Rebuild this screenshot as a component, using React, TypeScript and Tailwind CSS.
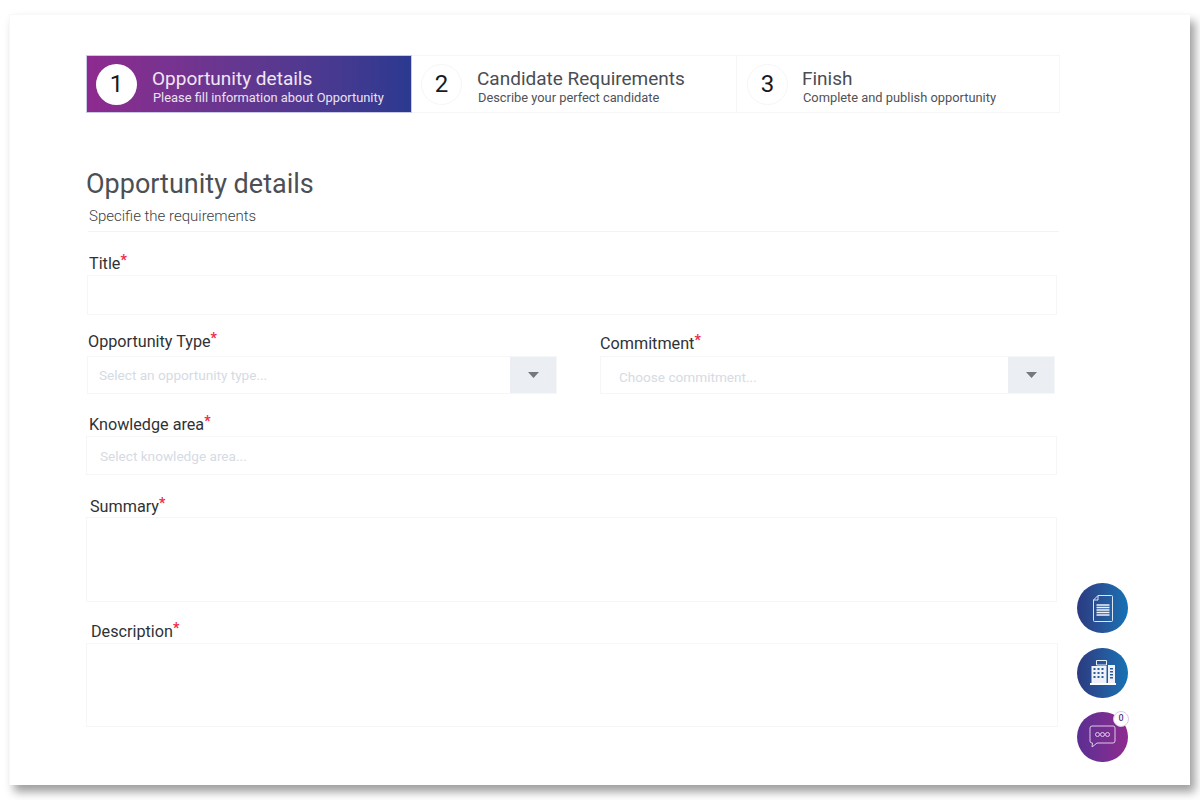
import React from 'react';

interface StepProps {
  num: number;
  title: string;
  sub: string;
  active?: boolean;
  className?: string;
  circleClass?: string;
}

function Step({ num, title, sub, active, className, circleClass }: StepProps) {
  return (
    <div
      className={`flex items-center h-full ${
        active
          ? 'bg-gradient-to-r from-[#8e2a8f] to-[#2b3990] border border-[#c9cbe6]'
          : 'border-y border-r border-[#f6f6f7]'
      } ${className ?? ''}`}
    >
      <div
        className={`w-[41px] h-[41px] rounded-full flex items-center justify-center text-[24px] text-[#1a1a1a] shrink-0 ${
          active ? 'bg-white' : 'bg-white border border-[#f6f6f7]'
        } ${circleClass ?? 'ml-[9px] mr-[15px]'}`}
      >
        {num}
      </div>
      <div className="mt-[4px]">
        <div className={`text-[19px] leading-[23px] ${active ? 'text-[#f1e6f3]' : 'text-[#4a4d52]'}`}>{title}</div>
        <div className={`text-[12.85px] leading-[16px] ml-[1px] ${active ? 'text-[#ece3f0]' : 'text-[#4f5256]'}`}>{sub}</div>
      </div>
    </div>
  );
}

function Label({ text, className }: { text: string; className?: string }) {
  return (
    <div className={`text-[16.2px] leading-[18px] text-[#2f3235] ${className ?? ''}`}>
      {text}
      <sup className="text-[#ef2b45] text-[14px] font-bold leading-none top-[-4px]">*</sup>
    </div>
  );
}

function Select({ placeholder, className, textClass }: { placeholder: string; className?: string; textClass?: string }) {
  return (
    <div className={`flex items-stretch h-[38px] border border-[#f5f6f7] ${className ?? ''}`}>
      <div className={`flex-1 flex items-center text-[13.6px] text-[#d5dbe3] ${textClass ?? ''}`}>{placeholder}</div>
      <div className="w-[46px] bg-[#ebeef2] flex items-center justify-center">
        <svg width="11" height="6" viewBox="0 0 11 6">
          <path d="M0 0h11L5.5 6z" fill="#75787c" />
        </svg>
      </div>
    </div>
  );
}

function Fab({ gradient, children }: { gradient: string; children: React.ReactNode }) {
  return <div className={`w-[51px] h-[50px] rounded-full flex items-center justify-center relative ${gradient}`}>{children}</div>;
}

export default function App() {
  return (
    <div className="w-[1200px] h-[800px] bg-white overflow-hidden pt-[14px] pl-[9px] font-['Roboto',sans-serif]">
      <div className="relative w-[1181px] h-[771px] bg-white border-t border-l border-[#f8f8f8] shadow-[5px_7px_9px_rgba(0,0,0,0.38)] pt-[40px] pl-[76px]">
        <div className="flex h-[58px] w-[974px]">
          <Step num={1} title="Opportunity details" sub="Please fill information about Opportunity" active className="w-[326px]" />
          <Step num={2} title="Candidate Requirements" sub="Describe your perfect candidate" className="w-[325px]" />
          <Step num={3} title="Finish" sub="Complete and publish opportunity" className="w-[323px]" circleClass="ml-[10px] mr-[14px]" />
        </div>

        <h1 className="mt-[54px] text-[27px] leading-[34px] text-[#4c4f54] font-normal">Opportunity details</h1>
        <p className="mt-[5px] ml-[3px] text-[15px] leading-[20px] font-light text-[#3d4044]">Specifie the requirements</p>
        <div className="mt-[5px] ml-[2px] w-[971px] border-t border-[#f3f4f5]" />

        <Label text="Title" className="mt-[23px] ml-[3px]" />
        <div className="mt-[2px] ml-[1px] w-[970px] h-[40px] border border-[#f5f6f7]" />

        <div className="flex mt-[18px] ml-[1px]">
          <div className="w-[513px]">
            <Label text="Opportunity Type" className="ml-[1px]" />
            <Select placeholder="Select an opportunity type..." className="mt-[5px] w-[470px]" textClass="pl-[11px]" />
          </div>
          <div className="w-[455px] pt-[2px]">
            <Label text="Commitment" />
            <Select placeholder="Choose commitment..." className="mt-[3px]" textClass="pl-[18px] pt-[4px]" />
          </div>
        </div>

        <Label text="Knowledge area" className="mt-[22px] ml-[3px]" />
        <div className="mt-[2px] w-[971px] h-[39px] border border-[#f5f6f7] flex items-center pl-[13px] pt-[2px] text-[13.6px] text-[#d5dbe3]">
          Select knowledge area...
        </div>

        <Label text="Summary" className="mt-[23px] ml-[4px]" />
        <div className="mt-[1px] w-[971px] h-[85px] border border-[#f5f6f7]" />

        <Label text="Description" className="mt-[21px] ml-[5px]" />
        <div className="mt-[2px] w-[972px] h-[84px] border border-[#f5f6f7]" />

        <div className="absolute left-[1067px] top-[568px] flex flex-col gap-[14.5px]">
          <Fab gradient="bg-gradient-to-r from-[#2b3a80] to-[#1272b4]">
            <svg width="20" height="27" viewBox="0 0 20 27" fill="none" stroke="#dfe6f1" strokeWidth="1">
              <path d="M5 0.5h13.5a1 1 0 0 1 1 1v24a1 1 0 0 1-1 1h-17a1 1 0 0 1-1-1V5z" />
              <path d="M5 0.5v4.5H0.5" />
              <path d="M3.5 10h13M3.5 12.5h13M3.5 15h13M3.5 17.5h13M3.5 20h13" strokeWidth="1.5" stroke="#eef2f8" />
            </svg>
          </Fab>
          <Fab gradient="bg-gradient-to-r from-[#2b3a80] to-[#1272b4]">
            <svg width="26" height="25" viewBox="0 0 26 25">
              <path d="M6.5 0.5h10V5h-10z" fill="none" stroke="#e8eef6" />
              <path d="M1.5 6h15v17h-15zM18 5h7v18h-7z" fill="#eef2f8" />
              <path d="M0 23h26v2H0z" fill="#fff" />
              <path
                d="M3.5 8h2v2h-2zM7.5 8h2v2h-2zM11.5 8h2v2h-2zM3.5 12h2v2h-2zM7.5 12h2v2h-2zM11.5 12h2v2h-2zM3.5 16h2v2h-2zM7.5 16h2v2h-2zM11.5 16h2v2h-2zM20 8h3v1.4h-3zM20 11h3v1.4h-3zM20 14h3v1.4h-3zM20 17h3v1.4h-3z"
                fill="#2a5c99"
              />
            </svg>
          </Fab>
          <Fab gradient="bg-gradient-to-r from-[#5b2e93] to-[#8e2a8f]">
            <svg width="27" height="24" viewBox="0 0 27 24" fill="none" stroke="#dccbe8" strokeWidth="1">
              <path d="M3 1h21a2 2 0 0 1 2 2v13a2 2 0 0 1-2 2H8l-5 4 0.5-4H3a2 2 0 0 1-2-2V3a2 2 0 0 1 2-2z" />
              <circle cx="8.5" cy="9.5" r="2" />
              <circle cx="13.5" cy="9.5" r="2" />
              <circle cx="18.5" cy="9.5" r="2" />
            </svg>
            <span className="absolute -top-[1px] -right-[1px] w-[16px] h-[16px] rounded-full bg-white border border-[#d9c9e6] flex items-center justify-center text-[9px] text-[#5b3a85] font-medium">
              0
            </span>
          </Fab>
        </div>
      </div>
    </div>
  );
}
